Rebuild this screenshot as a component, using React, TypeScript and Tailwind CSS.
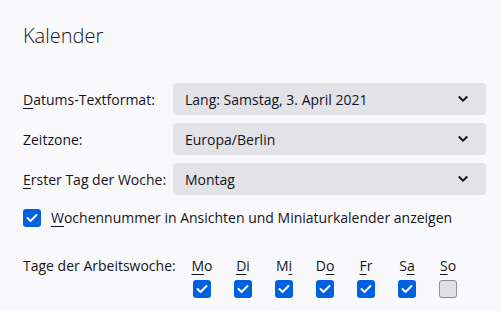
import React from "react";

const Chevron = () => (
  <svg width="10" height="6" viewBox="0 0 10 6" className="shrink-0">
    <path d="M1.5 1.2 L5 4.6 L8.5 1.2" fill="none" stroke="#15141a" strokeWidth="2" strokeLinecap="square" />
  </svg>
);

const Check = ({ checked }: { checked: boolean }) =>
  checked ? (
    <div className="w-[18px] h-[18px] rounded-[3px] bg-[#0061e0] flex items-center justify-center">
      <svg width="12" height="10" viewBox="0 0 12 10">
        <path d="M1.5 5 L4.5 8 L10.5 2" fill="none" stroke="white" strokeWidth="2" strokeLinecap="round" strokeLinejoin="round" />
      </svg>
    </div>
  ) : (
    <div className="w-[18px] h-[18px] rounded-[3px] bg-[#e0e0e6] border border-[#8f8f9d]" />
  );

const Select = ({ value }: { value: string }) => (
  <div className="h-8 w-[313px] rounded-[4px] bg-[#e2e2e7] flex items-center justify-between pl-[12px] pr-[18px]">
    <span>{value}</span>
    <Chevron />
  </div>
);

const U = ({ children }: { children: React.ReactNode }) => <span className="underline underline-offset-[3px] decoration-1">{children}</span>;

export default function App() {
  const days: [React.ReactNode, boolean][] = [
    [<><U>M</U>o</>, true],
    [<><U>D</U>i</>, true],
    [<>M<U>i</U></>, true],
    [<>D<U>o</U></>, true],
    [<><U>F</U>r</>, true],
    [<>S<U>a</U></>, true],
    [<><U>S</U>o</>, false],
  ];
  return (
    <div
      className="w-[501px] h-[311px] bg-[#f9f9fb] text-[#15141a] text-[14px] whitespace-nowrap pl-[23px] pt-[22px] overflow-hidden"
      style={{ fontFamily: '"Segoe UI", "Open Sans", sans-serif' }}
    >
      <div className="text-[20px] font-light leading-[28px]">Kalender</div>
      <div className="mt-[33px] flex flex-col gap-2">
        <div className="flex items-center">
          <div className="w-[150px]"><U>D</U>atums-Textformat:</div>
          <Select value="Lang: Samstag, 3. April 2021" />
        </div>
        <div className="flex items-center">
          <div className="w-[150px]">Zeitzone:</div>
          <Select value="Europa/Berlin" />
        </div>
        <div className="flex items-center">
          <div className="w-[150px]"><U>E</U>rster Tag der Woche:</div>
          <Select value="Montag" />
        </div>
      </div>
      <div className="mt-[12px] flex items-center gap-[10px]">
        <Check checked />
        <span><U>W</U>ochennummer in Ansichten und Miniaturkalender anzeigen</span>
      </div>
      <div className="mt-[26px] flex">
        <div className="w-[170px] leading-[24px]">Tage der Arbeitswoche:</div>
        <div className="flex">
          {days.map(([label, c], i) => (
            <div key={i} className="w-[41px] flex flex-col items-start">
              <div className="w-[18px] flex justify-center">
                <div className="leading-[24px] h-6">{label}</div>
              </div>
              <div className="mt-[2px]"><Check checked={c} /></div>
            </div>
          ))}
        </div>
      </div>
    </div>
  );
}
